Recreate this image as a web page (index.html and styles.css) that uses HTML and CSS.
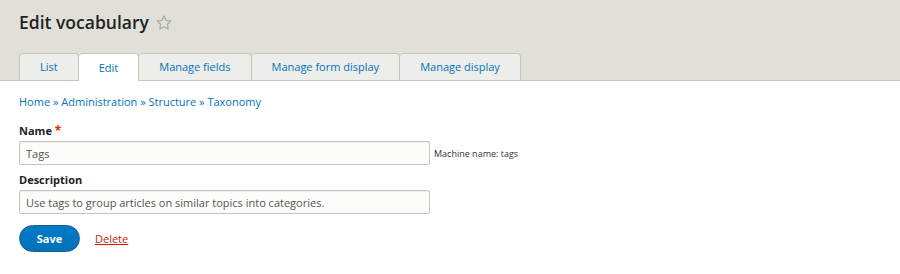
FILE: index.html
```html
<!DOCTYPE html>
<html lang="en">
<head>
    <meta charset="UTF-8">
    <title>Edit vocabulary</title>
    <link rel="stylesheet" href="styles.css">
</head>
<body>
    <div class="header">
        <h1 class="page-title">Edit vocabulary
            <svg class="star" width="16" height="15" viewBox="0 0 16 15"><path d="M8 1l2.1 4.3 4.7.7-3.4 3.3.8 4.7L8 11.8 3.8 14l.8-4.7L1.2 6l4.7-.7z" fill="none" stroke="#aaa9a2" stroke-width="1.2" stroke-linejoin="round"/></svg>
        </h1>
        <ul class="tabs">
            <li><a href="#">List</a></li>
            <li class="active"><a href="#">Edit</a></li>
            <li><a href="#">Manage fields</a></li>
            <li><a href="#">Manage form display</a></li>
            <li><a href="#">Manage display</a></li>
        </ul>
    </div>

    <div class="content">
        <div class="breadcrumb">
            <a href="#">Home</a> » <a href="#">Administration</a> » <a href="#">Structure</a> » <a href="#">Taxonomy</a>
        </div>

        <div class="form-item">
            <label>Name <span class="required">*</span></label>
            <div class="field-row">
                <input type="text" class="form-text" value="Tags">
                <span class="machine-name">Machine name: tags</span>
            </div>
        </div>

        <div class="form-item">
            <label>Description</label>
            <input type="text" class="form-text" value="Use tags to group articles on similar topics into categories.">
        </div>

        <div class="actions">
            <button class="btn-save">Save</button>
            <a href="#" class="delete">Delete</a>
        </div>
    </div>
</body>
</html>
```

FILE: styles.css
```css
body { margin: 0; font-family: "Open Sans", "Liberation Sans", sans-serif; font-size: 11px; color: #222; background: #fff; }
a { color: #0074bd; text-decoration: none; }

.header { background: #e0e0d8; padding: 10px 19px 0; border-bottom: 1px solid #c5c5be; }
.page-title { margin: 0; font-size: 17.5px; line-height: 24px; font-weight: 600; color: #232323; display: flex; align-items: center; gap: 7px; }
.star { margin-top: 1px; }

.tabs { list-style: none; margin: 19px 0 0; padding: 0; display: flex; }
.tabs li { background: #edede9; border: 1px solid #c5c5be; border-bottom: none; border-left: none; border-radius: 4px 4px 0 0; }
.tabs li:first-child { border-left: 1px solid #c5c5be; }
.tabs li a { display: block; padding: 0 20px; line-height: 26px; font-size: 11px; }
.tabs li.active { background: #fff; margin-bottom: -1px; }
.tabs li.active a { line-height: 27px; }

.content { padding: 0 19px; }
.breadcrumb { margin-top: 12px; line-height: 18px; color: #0074bd; }

.form-item { margin-top: 11px; }
.form-item + .form-item { margin-top: 6px; }
.form-item label { display: block; font-weight: 700; line-height: 18px; margin-bottom: 1px; color: #222; }
.required { color: #e62600; font-size: 12px; }
.field-row { display: flex; align-items: center; gap: 4px; }
.form-text { box-sizing: border-box; width: 411px; height: 24px; padding: 0 6px; border: 1px solid #c5c5be; border-radius: 2px; background: #fcfcfa; font-family: inherit; font-size: 11px; color: #555; box-shadow: inset 0 1px 1px rgba(0,0,0,0.06); }
.machine-name { font-size: 9px; color: #333; }

.actions { margin-top: 11px; display: flex; align-items: center; gap: 15px; }
.btn-save { width: 61px; height: 27px; border: 1px solid #1e5c90; border-radius: 14px; background: linear-gradient(#007bc6, #0071b8); color: #fff; font-family: inherit; font-size: 11px; font-weight: 700; padding: 0; }
.delete { color: #c72100; text-decoration: underline; font-size: 11px; }
```
